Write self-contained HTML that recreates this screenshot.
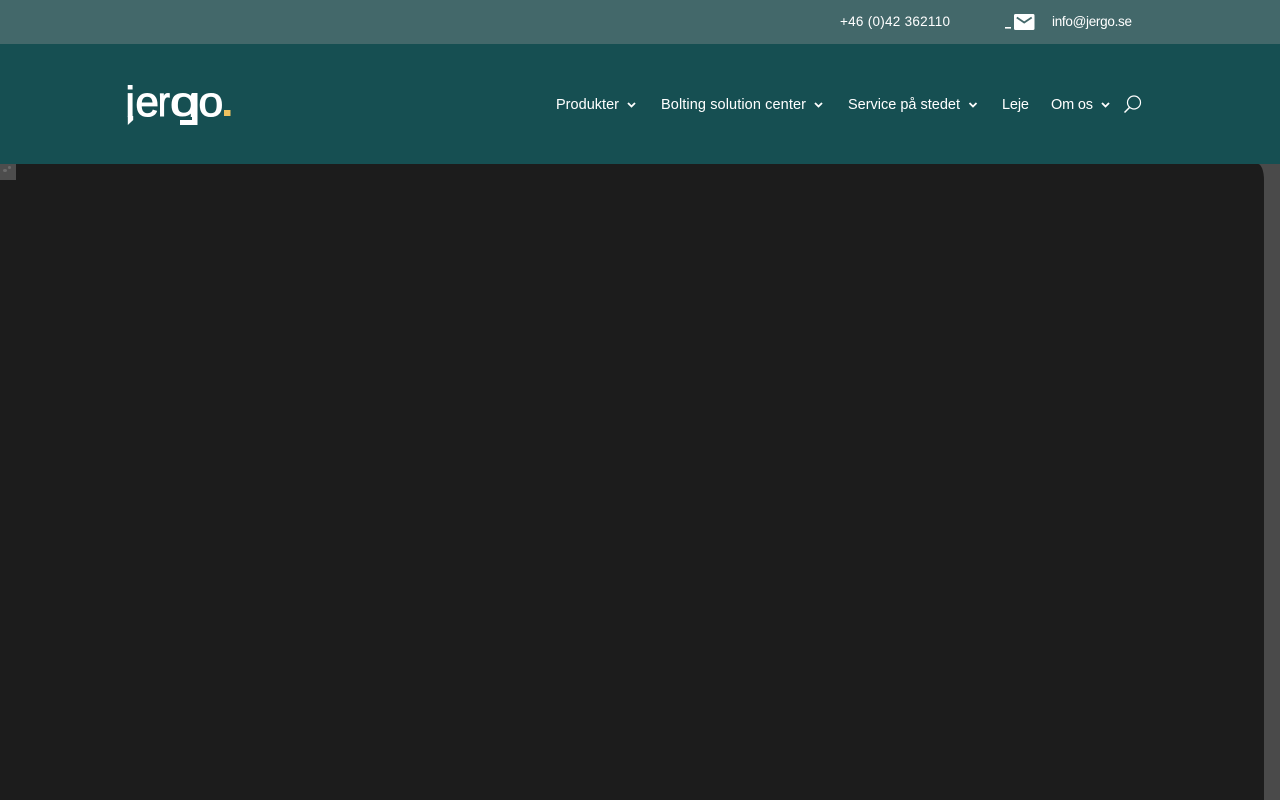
<!DOCTYPE html>
<html lang="sv">
<head>
<meta charset="utf-8">
<title>Jergo</title>
<style>
html,body{margin:0;padding:0;width:1280px;height:800px;overflow:hidden;background:#4a4a4a}
.dark{position:absolute;left:0;top:164px;width:1264px;height:636px;background:#1c1c1c;border-top-right-radius:6px 16px}
.sq{position:absolute;left:0;top:164px;width:16px;height:16px;background:#4d4d4d}
.sq i{position:absolute;border-radius:50%;background:#6a6a6a}
svg{position:absolute;left:0;top:0}
text{font-family:"Liberation Sans",sans-serif;fill:#fff}
.logo{stroke:#fff;stroke-width:1.100}
</style>
</head>
<body>
<div class="dark"></div>
<div class="sq"><i style="left:3px;top:5px;width:4px;height:3px"></i><i style="left:8px;top:2px;width:3px;height:3px"></i></div>
<svg width="1280" height="164" viewBox="0 0 1280 164" xmlns="http://www.w3.org/2000/svg">
  <defs>
    <clipPath id="abovebase"><rect x="120" y="78" width="115" height="39"/></clipPath>
  </defs>
  <rect x="0" y="0" width="1280" height="44" fill="#43686a"/>
  <rect x="0" y="44" width="1280" height="120" fill="#164f52"/>

  <text x="840" y="26" font-size="13.500" textLength="110" lengthAdjust="spacing">+46 (0)42 362110</text>
  <text x="1052" y="26" font-size="13.500" textLength="80" lengthAdjust="spacing">info@jergo.se</text>

  <rect x="1005" y="27" width="6" height="1.600" fill="#fff"/>
  <rect x="1014" y="14" width="20.500" height="16" rx="1.500" fill="#fff"/>
  <path d="M1016.800 17.500L1024.200 22.500L1031.700 17.500" fill="none" stroke="#43686a" stroke-width="1.800"/>

  <text x="556" y="109" font-size="14.500" textLength="63" lengthAdjust="spacing">Produkter</text>
  <text x="661" y="109" font-size="14.500" textLength="145" lengthAdjust="spacing">Bolting solution center</text>
  <text x="848" y="109" font-size="14.500" textLength="112" lengthAdjust="spacing">Service på stedet</text>
  <text x="1002" y="109" font-size="14.500" textLength="27" lengthAdjust="spacing">Leje</text>
  <text x="1051" y="109" font-size="14.500" textLength="42" lengthAdjust="spacing">Om os</text>

  <g fill="none" stroke="#fff" stroke-width="1.800">
    <path d="M628 103L631.500 106.500L635 103"/>
    <path d="M815 103L818.500 106.500L822 103"/>
    <path d="M969.500 103L973 106.500L976.500 103"/>
    <path d="M1102 103L1105.500 106.500L1109 103"/>
  </g>

  <circle cx="1134" cy="102.500" r="6.500" fill="none" stroke="#fff" stroke-width="1.200"/>
  <path d="M1129.500 107.500L1124.500 112.500" fill="none" stroke="#fff" stroke-width="1.500"/>

  <g clip-path="url(#abovebase)">
    <text class="logo" x="125.500" y="116" font-size="42">j</text>
    <text class="logo" x="135.500" y="116" font-size="42">e</text>
    <text class="logo" transform="translate(158 116) scale(.85 1)" x="0" y="0" font-size="42">r</text>
    <text class="logo" transform="translate(170 116) scale(1.280 1)" x="0" y="0" font-size="42">g</text>
    <text class="logo" transform="translate(198.500 116) scale(1.060 1)" x="0" y="0" font-size="42">o</text>
  </g>
  <polygon points="127.800,116 133.200,116 133.200,120 127.800,125" fill="#fff"/>
  <rect x="192" y="93" width="5.500" height="32" fill="#fff"/>
  <rect x="180" y="120" width="17.500" height="5" fill="#fff"/>
  <rect x="224" y="110" width="6.500" height="6" fill="#eec15f"/>
</svg>
</body>
</html>
